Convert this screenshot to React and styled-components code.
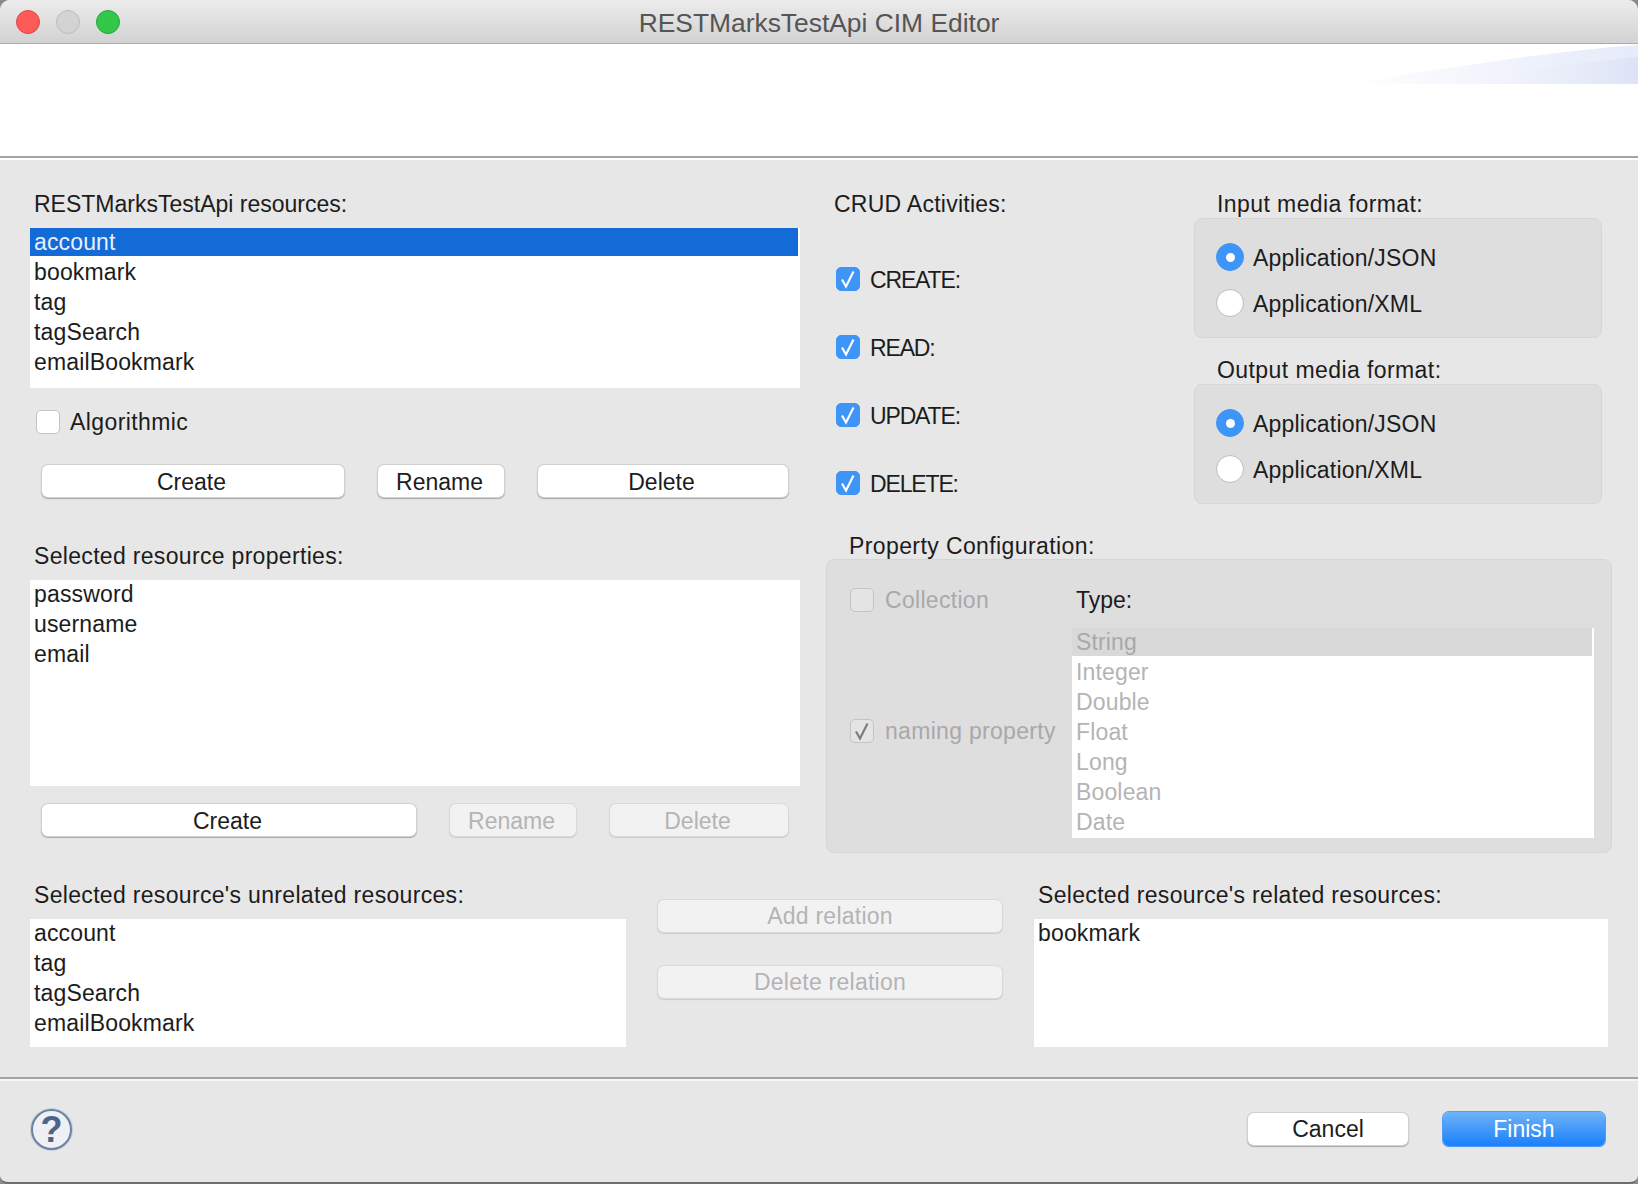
import React from 'react';
import styled, { createGlobalStyle } from 'styled-components';

const GlobalStyle = createGlobalStyle`
  html, body {
    margin: 0;
    padding: 0;
    height: 1184px;
    overflow: hidden;
    background: #8a8a8a;
  }
  * {
    box-sizing: border-box;
  }
`;

const FONT = '"Liberation Sans", Arial, sans-serif';

const Window = styled.div`
  width: 1638px;
  height: 1184px;
  display: flex;
  flex-direction: column;
  overflow: hidden;
  border-radius: 10px 10px 8px 8px;
  background: #e7e7e7;
  font-family: ${FONT};
  font-size: 23px;
  color: #1c1c1c;
  border-bottom: 2px solid #6e6e6e;
`;

const TitleBar = styled.div`
  position: relative;
  height: 44px;
  flex: none;
  display: flex;
  align-items: center;
  justify-content: center;
  background: linear-gradient(#ececec, #d2d2d2);
  border-bottom: 1px solid #aaaaaa;
`;

const Lights = styled.div`
  position: absolute;
  top: 10px;
  left: 16px;
  display: flex;
  gap: 16px;
`;

const Light = styled.span`
  width: 24px;
  height: 24px;
  border-radius: 50%;
  background: ${props => props.color};
  border: 1px solid ${props => props.edge};
`;

const Title = styled.div`
  font-size: 26.4px;
  color: #555555;
  line-height: 44px;
  padding-top: 2px;
`;

const Banner = styled.div`
  position: relative;
  height: 116px;
  flex: none;
  background: #ffffff;
  border-bottom: 2px solid #ffffff;
`;

const BannerRule = styled.div`
  position: absolute;
  left: 0;
  right: 0;
  bottom: 0;
  height: 2px;
  background: #a3a3a3;
`;

const BannerGlow = styled.svg`
  position: absolute;
  top: 0;
  right: 0;
`;

const Content = styled.div`
  flex: 1;
  min-height: 0;
  display: flex;
  flex-direction: column;
  padding: 29px 0 0 30px;
`;

const TopRow = styled.div`
  display: flex;
  height: 664px;
  flex: none;
`;

const LeftColumn = styled.div`
  width: 770px;
  flex: none;
  display: flex;
  flex-direction: column;
`;

const RightColumn = styled.div`
  margin-left: 26px;
  width: 786px;
  flex: none;
  display: flex;
  flex-direction: column;
`;

const Label = styled.div`
  height: 30px;
  line-height: 30px;
  padding-left: ${props => props.$indent ?? 4}px;
  margin-bottom: 9px;
  margin-top: ${props => props.$top || 0}px;
  letter-spacing: ${props => props.$spread ?? 0.32}px;
  white-space: nowrap;
`;

const ListBox = styled.div`
  height: ${props => props.$height}px;
  flex: none;
  padding-right: 2px;
  background: #ffffff;
  letter-spacing: 0.15px;
  color: ${props => (props.$disabled ? '#b4b4b4' : '#1c1c1c')};
`;

const ListRow = styled.div`
  height: 30px;
  line-height: 28px;
  padding-left: 4px;
  white-space: nowrap;
  color: ${props => props.$ink || 'inherit'};
  background: ${props =>
    props.$selected ? `linear-gradient(${props.$selected}, ${props.$selected}) no-repeat top left / 100% 28px` : 'none'};
`;

const CheckRow = styled.label`
  display: flex;
  align-items: center;
  gap: ${props => (props.$disabled ? 11 : 10)}px;
  height: 24px;
  white-space: nowrap;
  letter-spacing: ${props => props.$spread ?? 0.3}px;
  color: ${props => (props.$disabled ? '#a9a9a9' : 'inherit')};
`;

const CrudName = styled.span`
  margin-top: 2px;
`;

const Box = styled.span`
  width: 24px;
  height: 24px;
  flex: none;
  border-radius: 5px;
  display: flex;
  align-items: center;
  justify-content: center;
  background: ${props => props.$tone === 'blue' ? '#3d95f7' : props.$tone === 'muted' ? '#e4e4e4' : '#ffffff'};
  border: 1px solid ${props => props.$tone === 'blue' ? '#3d95f7' : '#c4c4c4'};
`;

const CheckBox = ({ tone, checked, stroke = '#ffffff' }) => (
  <Box $tone={tone}>
    {checked && (
      <svg width="22" height="22" viewBox="0 0 22 22">
        <path d="M5 11.5 L9 18.5 L16.5 3.5" fill="none" stroke={stroke} strokeWidth="2.2" />
      </svg>
    )}
  </Box>
);

const AlgorithmicRow = styled.div`
  margin: 22px 0 31px 6px;
`;

const ButtonRow = styled.div`
  display: flex;
  gap: 34px;
  padding-left: 12px;
  margin-top: ${props => props.$top || 0}px;

  & > button {
    padding: 2px 3px 0 0;
  }
`;

const Button = styled.button`
  width: ${props => props.$width}px;
  height: 32px;
  flex: none;
  padding: 0;
  border: none;
  border-radius: 6px;
  font-family: ${FONT};
  font-size: 23px;
  line-height: 30px;
  color: #1c1c1c;
  background: #ffffff;
  box-shadow: 0 0 0 1px #d0d0d0, 0 1px 1px 1px #a8a8a8;

  &:disabled {
    color: #b4b4b4;
    background: #f2f2f2;
    box-shadow: 0 0 0 1px #dadada, 0 1px 1px 1px #cccccc;
  }
`;

const PrimaryButton = styled(Button)`
  height: 34px;
  color: #ffffff;
  background: linear-gradient(#6fb3f8, #1a7ffb);
  box-shadow: 0 0 0 1px #4e9cf6, 0 1px 1px #9fb8d8;
`;

const CrudRow = styled.div`
  display: flex;
  height: 315px;
  flex: none;
`;

const CrudColumn = styled.div`
  width: 368px;
  flex: none;
  padding-left: 8px;
`;

const CrudChecks = styled.div`
  display: flex;
  flex-direction: column;
  gap: 44px;
  margin-top: 48px;
  padding-left: 2px;
`;

const FormatColumn = styled.div`
  width: 408px;
  flex: none;
  display: flex;
  flex-direction: column;
  gap: 17px;
`;

const FormatLabel = styled.div`
  height: 29px;
  line-height: 30px;
  padding-left: 23px;
  letter-spacing: 0.42px;
`;

const GroupPanel = styled.div`
  border: 1px solid #d6d6d6;
  border-radius: 8px;
  background: #dedede;
`;

const FormatPanel = styled(GroupPanel)`
  height: 120px;
  padding: 24px 0 0 21px;
  display: flex;
  flex-direction: column;
  gap: 18px;
`;

const RadioRow = styled.label`
  display: flex;
  align-items: center;
  gap: 9px;
  height: 28px;
  letter-spacing: 0.2px;
`;

const RadioText = styled.span`
  margin-top: 2px;
`;

const Radio = styled.span`
  width: 28px;
  height: 28px;
  border-radius: 50%;
  display: flex;
  align-items: center;
  justify-content: center;
  background: ${props => (props.$on ? '#3d95f7' : '#ffffff')};
  border: 1px solid ${props => (props.$on ? '#3d95f7' : '#bdbdbd')};

  &::after {
    content: '';
    width: 9px;
    height: 9px;
    border-radius: 50%;
    background: ${props => (props.$on ? '#ffffff' : 'transparent')};
  }
`;

const PropertyTitle = styled.div`
  height: 28px;
  flex: none;
  line-height: 30px;
  padding-left: 23px;
  margin-top: 27px;
  letter-spacing: 0.4px;
`;

const PropertyPanel = styled(GroupPanel)`
  height: 294px;
  flex: none;
  display: flex;
`;

const PropertyFlags = styled.div`
  width: 245px;
  flex: none;
  padding: 28px 0 0 23px;
  display: flex;
  flex-direction: column;
  gap: 107px;
`;

const TypeColumn = styled.div`
  width: 522px;
  flex: none;
  padding-top: 26px;
`;

const TypeLabel = styled.div`
  height: 28px;
  line-height: 28px;
  padding-left: 4px;
  margin-bottom: 14px;
`;

const BottomRow = styled.div`
  display: flex;
  height: 197px;
  flex: none;
  margin-top: 27px;
`;

const RelationColumn = styled.div`
  width: ${props => props.$width}px;
  flex: none;
`;

const RelationActions = styled.div`
  width: 344px;
  flex: none;
  margin: 20px 32px 0;
  display: flex;
  flex-direction: column;
  gap: 34px;

  & > button {
    letter-spacing: 0.25px;
  }
`;

const Divider = styled.div`
  height: 4px;
  flex: none;
  margin-left: -30px;
  border-top: 2px solid #a3a3a3;
  border-bottom: 2px solid #f6f6f6;
`;

const Footer = styled.div`
  height: 101px;
  flex: none;
  display: flex;
  align-items: flex-start;
  justify-content: space-between;
  margin-left: -30px;
  padding: 28px 33px 0 31px;
`;

const HelpIcon = styled.div`
  width: 41px;
  height: 41px;
  border-radius: 50%;
  border: 2px solid #6a83a3;
  background: #eef0f3;
  box-shadow: 0 0 0 1px #c3cbd6;
  display: flex;
  align-items: center;
  justify-content: center;
  font-size: 36px;
  font-weight: bold;
  color: #4b6588;
`;

const FooterButtons = styled.div`
  display: flex;
  align-items: center;
  gap: 35px;
  height: 34px;
  margin-top: 3px;
`;

const resources = ['bookmark', 'tag', 'tagSearch', 'emailBookmark'];
const properties = ['password', 'username', 'email'];
const unrelated = ['account', 'tag', 'tagSearch', 'emailBookmark'];
const types = ['Integer', 'Double', 'Float', 'Long', 'Boolean', 'Date'];
const crud = ['CREATE:', 'READ:', 'UPDATE:', 'DELETE:'];

const FormatGroup = ({ title }) => (
  <div>
    <FormatLabel>{title}</FormatLabel>
    <FormatPanel>
      <RadioRow>
        <Radio $on />
        <RadioText>Application/JSON</RadioText>
      </RadioRow>
      <RadioRow>
        <Radio />
        <RadioText>Application/XML</RadioText>
      </RadioRow>
    </FormatPanel>
  </div>
);

export default function App() {
  return (
    <>
      <GlobalStyle />
      <Window>
        <TitleBar>
          <Lights>
            <Light color="#fc5b57" edge="#e3443f" />
            <Light color="#d3d3d3" edge="#bcbcbc" />
            <Light color="#34c84a" edge="#24a73a" />
          </Lights>
          <Title>RESTMarksTestApi CIM Editor</Title>
        </TitleBar>
        <Banner>
          <BannerGlow width="300" height="40" viewBox="0 0 300 40">
            <defs>
              <linearGradient id="glowSoft" x1="0" x2="1" y1="0" y2="0">
                <stop offset="0" stopColor="#ffffff" />
                <stop offset="0.5" stopColor="#f1f4fc" />
                <stop offset="1" stopColor="#e6ebfa" />
              </linearGradient>
              <linearGradient id="glowDeep" x1="0" x2="1" y1="0" y2="0">
                <stop offset="0" stopColor="#ffffff" stopOpacity="0" />
                <stop offset="1" stopColor="#dde3f6" />
              </linearGradient>
            </defs>
            <path d="M10 40 C110 24 205 8 300 1 L300 40 Z" fill="url(#glowSoft)" />
            <path d="M70 40 C150 30 225 20 300 13 L300 40 Z" fill="url(#glowDeep)" />
          </BannerGlow>
          <BannerRule />
        </Banner>
        <Content>
          <TopRow>
            <LeftColumn>
              <Label $spread={0}>RESTMarksTestApi resources:</Label>
              <ListBox $height={160}>
                <ListRow $selected="#126bd6" $ink="#e8f0fb">account</ListRow>
                {resources.map(name => (
                  <ListRow key={name}>{name}</ListRow>
                ))}
              </ListBox>
              <AlgorithmicRow>
                <CheckRow $spread={0.4}>
                  <CheckBox />
                  Algorithmic
                </CheckRow>
              </AlgorithmicRow>
              <ButtonRow>
                <Button $width={302}>Create</Button>
                <Button $width={126}>Rename</Button>
                <Button $width={250}>Delete</Button>
              </ButtonRow>
              <Label $top={44}>Selected resource properties:</Label>
              <ListBox $height={206}>
                {properties.map(name => (
                  <ListRow key={name}>{name}</ListRow>
                ))}
              </ListBox>
              <ButtonRow $top={18}>
                <Button $width={374}>Create</Button>
                <Button $width={126} disabled>Rename</Button>
                <Button $width={178} disabled>Delete</Button>
              </ButtonRow>
            </LeftColumn>
            <RightColumn>
              <CrudRow>
                <CrudColumn>
                  <Label $indent={0} $spread={0.25}>CRUD Activities:</Label>
                  <CrudChecks>
                    {crud.map(name => (
                      <CheckRow key={name} $spread={-1.15}>
                        <CheckBox tone="blue" checked />
                        <CrudName>{name}</CrudName>
                      </CheckRow>
                    ))}
                  </CrudChecks>
                </CrudColumn>
                <FormatColumn>
                  <FormatGroup title="Input media format:" />
                  <FormatGroup title="Output media format:" />
                </FormatColumn>
              </CrudRow>
              <PropertyTitle>Property Configuration:</PropertyTitle>
              <PropertyPanel>
                <PropertyFlags>
                  <CheckRow $disabled>
                    <CheckBox tone="muted" />
                    Collection
                  </CheckRow>
                  <CheckRow $disabled>
                    <CheckBox tone="muted" checked stroke="#7c7c7c" />
                    naming property
                  </CheckRow>
                </PropertyFlags>
                <TypeColumn>
                  <TypeLabel>Type:</TypeLabel>
                  <ListBox $height={210} $disabled>
                    <ListRow $selected="#d9d9d9" $ink="#a9a9a9">String</ListRow>
                    {types.map(name => (
                      <ListRow key={name}>{name}</ListRow>
                    ))}
                  </ListBox>
                </TypeColumn>
              </PropertyPanel>
            </RightColumn>
          </TopRow>
          <BottomRow>
            <RelationColumn $width={596}>
              <Label>Selected resource's unrelated resources:</Label>
              <ListBox $height={128}>
                {unrelated.map(name => (
                  <ListRow key={name}>{name}</ListRow>
                ))}
              </ListBox>
            </RelationColumn>
            <RelationActions>
              <Button $width={344} disabled>Add relation</Button>
              <Button $width={344} disabled>Delete relation</Button>
            </RelationActions>
            <RelationColumn $width={574}>
              <Label>Selected resource's related resources:</Label>
              <ListBox $height={128}>
                <ListRow>bookmark</ListRow>
              </ListBox>
            </RelationColumn>
          </BottomRow>
          <Divider />
          <Footer>
            <HelpIcon>?</HelpIcon>
            <FooterButtons>
              <Button $width={160}>Cancel</Button>
              <PrimaryButton $width={162}>Finish</PrimaryButton>
            </FooterButtons>
          </Footer>
        </Content>
      </Window>
    </>
  );
}
